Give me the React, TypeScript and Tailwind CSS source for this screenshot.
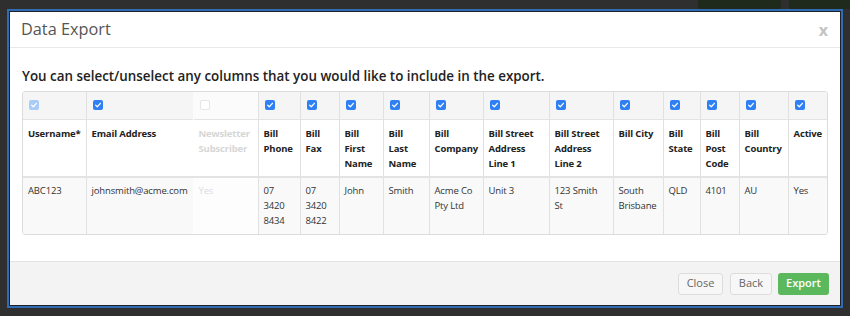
import React from 'react';

type Col = {
  label: string;
  width: string;
  value: string;
  checked: boolean;
  disabled?: boolean;
  locked?: boolean;
};

const columns: Col[] = [
  { label: 'Username*', width: 'w-[63px]', value: 'ABC123', checked: true, locked: true },
  { label: 'Email Address', width: 'w-[107px]', value: 'johnsmith@acme.com', checked: true },
  { label: 'Newsletter Subscriber', width: 'w-[65px]', value: 'Yes', checked: false, disabled: true },
  { label: 'Bill Phone', width: 'w-[42px]', value: '07 3420 8434', checked: true },
  { label: 'Bill Fax', width: 'w-[39px]', value: '07 3420 8422', checked: true },
  { label: 'Bill First Name', width: 'w-[44px]', value: 'John', checked: true },
  { label: 'Bill Last Name', width: 'w-[46px]', value: 'Smith', checked: true },
  { label: 'Bill Company', width: 'w-[54px]', value: 'Acme Co Pty Ltd', checked: true },
  { label: 'Bill Street Address Line 1', width: 'w-[66px]', value: 'Unit 3', checked: true },
  { label: 'Bill Street Address Line 2', width: 'w-[64px]', value: '123 Smith St', checked: true },
  { label: 'Bill City', width: 'w-[50px]', value: 'South Brisbane', checked: true },
  { label: 'Bill State', width: 'w-[37px]', value: 'QLD', checked: true },
  { label: 'Bill Post Code', width: 'w-[39px]', value: '4101', checked: true },
  { label: 'Bill Country', width: 'w-[49px]', value: 'AU', checked: true },
  { label: 'Active', width: 'w-[41px]', value: 'Yes', checked: true },
];

function Checkbox({ checked, locked }: { checked: boolean; locked?: boolean }) {
  if (!checked) {
    return <span className="block w-[10px] h-[10px] rounded-[2px] border border-[#e6e6e6] bg-white" />;
  }
  return (
    <span
      className={
        'flex items-center justify-center w-[10px] h-[10px] rounded-[2px] ' +
        (locked ? 'bg-[#a9cbf7]' : 'bg-[#2f7ff5]')
      }
    >
      <svg viewBox="0 0 10 10" className="w-[8px] h-[8px]">
        <path d="M2 5.2 L4.1 7.2 L8 2.9" fill="none" stroke="white" strokeWidth="1.6" strokeLinecap="round" strokeLinejoin="round" />
      </svg>
    </span>
  );
}

export default function App() {
  return (
    <div className="w-[850px] h-[316px] bg-[#2f2f2f] overflow-hidden font-['Open_Sans',sans-serif] flex flex-col">
      {/* page behind the backdrop */}
      <div className="h-[9px] flex shrink-0">
        <div className="ml-[698px] w-[83px] bg-[#1f2a1c] rounded-b-[2px]" />
        <div className="ml-[8px] flex-1 bg-[#1f2a1c] rounded-bl-[2px]" />
      </div>

      <div className="ml-[7px] w-[836px] h-[299px] border-2 border-[#2f6cb3] bg-[#1e2228] p-px">
        <div className="w-[830px] h-[293px] bg-white flex flex-col">
          {/* header */}
          <div className="h-[36px] border-b border-[#e8e8e8] flex items-center justify-between pl-[11px] pr-[12px]">
            <h2 className="text-[16.3px] text-[#555] leading-none">Data Export</h2>
            <span className="text-[16px] font-bold text-[#c4c4c4] leading-none">x</span>
          </div>

          {/* body */}
          <div className="flex-1 px-[12px] pt-[19px]">
            <p className="text-[13.4px] font-semibold text-[#222] leading-[18px]">
              You can select/unselect any columns that you would like to include in the export.
            </p>
            <div className="mt-[6px] w-[806px] border border-[#dcdcdc] rounded-[3px] overflow-hidden">
              <table className="table-fixed border-collapse w-[804px] text-[9.5px] tracking-[-0.15px] leading-[15px] text-[#333]">
                <colgroup>
                  {columns.map((c) => (
                    <col key={c.label} className={c.width} />
                  ))}
                </colgroup>
                <tbody>
                  <tr className="h-[27px] bg-[#f5f5f5] border-b border-[#e3e3e3]">
                    {columns.map((c, i) => (
                      <td
                        key={c.label}
                        className={
                          'align-top pl-[6px] pt-[8px] ' +
                          (i > 0 ? 'border-l border-[#e1e1e1] ' : '') +
                          (c.disabled ? 'bg-[#fbfbfb] border-l-[#fbfbfb]' : '')
                        }
                      >
                        <Checkbox checked={c.checked} locked={c.locked} />
                      </td>
                    ))}
                  </tr>
                  <tr className="h-[58px] bg-white border-b-2 border-[#e3e3e3]">
                    {columns.map((c, i) => (
                      <td
                        key={c.label}
                        className={
                          'align-top px-[5px] pt-[6px] font-bold ' +
                          (i > 0 ? 'border-l border-[#e1e1e1] ' : '') +
                          (c.disabled ? 'text-[#d6d6d6] border-l-white' : 'text-[#222]')
                        }
                      >
                        {c.label}
                      </td>
                    ))}
                  </tr>
                  <tr className="h-[57px] bg-[#f9f9f9]">
                    {columns.map((c, i) => (
                      <td
                        key={c.label}
                        className={
                          'align-top px-[5px] pt-[5px] ' +
                          (i > 0 ? 'border-l border-[#e1e1e1] ' : '') +
                          (c.disabled ? 'text-[#dcdcdc] bg-[#fdfdfd] border-l-[#fdfdfd]' : '')
                        }
                      >
                        {c.value}
                      </td>
                    ))}
                  </tr>
                </tbody>
              </table>
            </div>
          </div>

          {/* footer */}
          <div className="h-[44px] bg-[#f3f3f3] border-t border-[#e3e3e3] flex items-center justify-end pr-[11px]">
            <button className="h-[22px] w-[45px] rounded-[3px] border border-[#dcdcdc] bg-[#f7f7f7] text-[11px] text-[#666]">
              Close
            </button>
            <button className="ml-[7px] h-[22px] w-[42px] rounded-[3px] border border-[#dcdcdc] bg-[#f7f7f7] text-[11px] text-[#666]">
              Back
            </button>
            <button className="ml-[6px] h-[22px] w-[51px] rounded-[3px] bg-[#5cb85c] text-[11px] font-semibold text-white">
              Export
            </button>
          </div>
        </div>
      </div>
    </div>
  );
}
